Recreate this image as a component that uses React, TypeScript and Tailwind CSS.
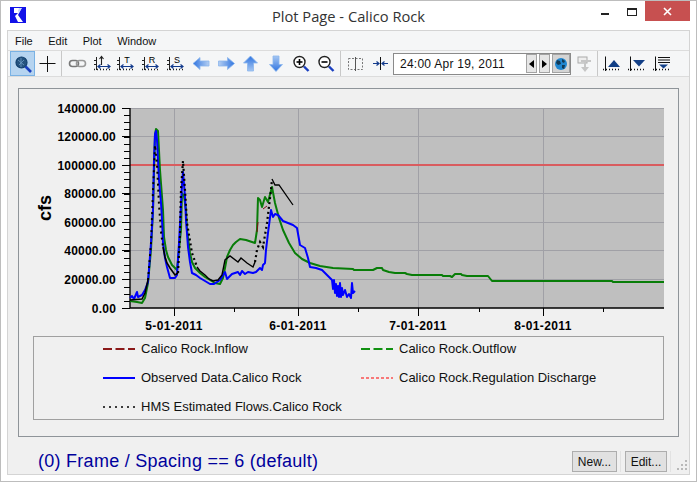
import type { ReactNode } from "react";

const yLabels = ["140000.00", "120000.00", "100000.00", "80000.00", "60000.00", "40000.00", "20000.00", "0.00"];
const yMajor = [108, 136, 165, 193, 222, 250, 279, 308];
const xMajor = [174, 298, 418, 543];
const xMinor = [234, 358, 479, 603];
const xLabels = ["5-01-2011", "6-01-2011", "7-01-2011", "8-01-2011"];

const outflow =
  "130,301 137,302 142,303 145,298 148,283 151,250 153,210 155,135 156,129 158,131 160,170 163,210 164,237 166,250 168,257 172,265 177,270 179,250 181,230 182,193 184,196 186,210 187,230 190,253 192,262 195,268 200,273 205,277 210,280 215,283 220,284 223,278 225,268 227,257 230,250 233,245 236,242 240,239 246,240 255,243 257,230 258,198 260,200 262,207 265,197 268,202 272,187 275,203 279,218 283,230 289,243 295,253 302,259 310,263 320,266 333,268 353,269 354,270 373,270 377,268 382,268 383,270 389,272 395,273 405,273 407,274 412,275 442,275 443,276 450,276 452,277 455,274 461,274 462,275 467,276 488,276 492,281 612,281 613,282 664,282";
const observed =
  "130,298 132,296 134,299 137,292 138,297 142,295 145,290 148,282 151,243 153,210 154,160 155,134 156,131 157,140 159,180 161,203 162,220 163,243 165,258 167,267 170,278 175,278 177,275 179,243 181,205 182,185 183,172 185,197 186,220 188,247 190,262 192,273 196,275 200,278 205,281 210,284 214,284 220,280 225,272 227,279 232,274 238,272 240,275 242,271 245,274 248,272 253,273 256,272 260,268 262,270 263,265 265,263 266,250 268,233 271,210 273,217 275,214 278,215 283,221 288,223 293,225 297,228 300,245 305,248 308,258 310,267 316,268 322,270 327,275 332,280 333,289 334,280 335,293 336,284 337,296 338,286 339,297 340,283 341,297 342,288 343,295 345,290 347,297 349,294 351,298 352,283 353,293 355,291";
const hmsStart = "130,300 142,299 145,293 148,280";
const hmsA = "148,280 151,243 153,190 155,145 157,165 159,205 161,232 163,247";
const hmsB = "163,247 165,257 167,263 170,268 175,275 178,273";
const hmsC = "178,273 180,235 181,190 183,161 185,190 187,223 192,253 197,267";
const hmsD = "197,267 200,271 205,275 209,279 213,281 218,280 222,275 225,260 230,256 238,262 241,258 247,263 253,267 255,262";
const hmsE = "255,262 257,250 260,242 263,247 267,223 271,190 272,179";
const hmsF = "272,179 275,185 279,185 293,205";

function Chart() {
  const minors: number[] = [];
  for (let i = 0; i <= 28; i++) minors.push(108 + (i * 200) / 28);
  return (
    <svg width={658} height={247} viewBox="19 89 658 247" className="block shrink-0">
      <text x={51} y={208} transform="rotate(-90 51 208)" textAnchor="middle" className="fill-black text-[18px] font-bold">
        cfs
      </text>
      <rect x={130} y={108} width={534} height={200} fill="#bfbfbf" />
      {yMajor.slice(0, 7).map((y) => (
        <line key={y} x1={130} x2={664} y1={y + 0.5} y2={y + 0.5} stroke="#a0a0a6" />
      ))}
      {xMajor.map((x) => (
        <line key={x} x1={x + 0.5} x2={x + 0.5} y1={108} y2={308} stroke="#a0a0a6" />
      ))}
      <line x1={130} x2={664} y1={165} y2={165} stroke="#d95c5f" strokeWidth={2} />

      {minors.map((y) => (
        <line key={y} x1={124} x2={130} y1={Math.round(y) + 0.5} y2={Math.round(y) + 0.5} stroke="#000" />
      ))}
      {yMajor.map((y) => (
        <line key={y} x1={122} x2={130} y1={y + 0.5} y2={y + 0.5} stroke="#000" />
      ))}
      <line x1={130} x2={130} y1={108} y2={308} stroke="#000" strokeWidth={1.4} />
      <line x1={130} x2={664} y1={308} y2={308} stroke="#000" strokeWidth={1.4} />
      {xMajor.map((x) => (
        <line key={x} x1={x + 0.5} x2={x + 0.5} y1={308} y2={316} stroke="#000" />
      ))}
      {xMinor.map((x) => (
        <line key={x} x1={x + 0.5} x2={x + 0.5} y1={308} y2={312} stroke="#000" />
      ))}
      {yLabels.map((label, i) => (
        <text key={label} x={116} y={yMajor[i] + 4.5} textAnchor="end" className="fill-black text-[12px] font-bold tracking-[0.2px]">
          {label}
        </text>
      ))}
      {xLabels.map((label, i) => (
        <text key={label} x={xMajor[i]} y={330} textAnchor="middle" className="fill-black text-[12px] font-bold tracking-[0.4px]">
          {label}
        </text>
      ))}

      <polyline points={outflow} fill="none" stroke="#087d08" strokeWidth={2} strokeLinejoin="round" />
      <polyline points="257,232 258,222" fill="none" stroke="#7d1212" strokeWidth={1} />
      <polyline points="263,209 267,206" fill="none" stroke="#7d1212" strokeWidth={1} />
      <polyline points={observed} fill="none" stroke="#0000ff" strokeWidth={2} strokeLinejoin="round" />
      <polyline points={hmsStart} fill="none" stroke="#000" strokeWidth={1.6} />
      <polyline points={hmsA} fill="none" stroke="#000" strokeWidth={2} strokeDasharray="2 4" />
      <polyline points={hmsB} fill="none" stroke="#000" strokeWidth={1.6} />
      <polyline points={hmsC} fill="none" stroke="#000" strokeWidth={2.2} strokeDasharray="2 3" />
      <polyline points={hmsD} fill="none" stroke="#000" strokeWidth={1.4} />
      <polyline points={hmsE} fill="none" stroke="#000" strokeWidth={2.2} strokeDasharray="2 3" />
      <polyline points={hmsF} fill="none" stroke="#000" strokeWidth={1.3} />
    </svg>
  );
}

function Swatch({ color, width, dash }: { color: string; width: number; dash?: string }) {
  return (
    <svg width={32} height={4} className="mr-[6px] shrink-0">
      <line x1={0} x2={32} y1={2} y2={2} stroke={color} strokeWidth={width} strokeDasharray={dash} />
    </svg>
  );
}

function LegendItem({ color, width, dash, label }: { color: string; width: number; dash?: string; label: string }) {
  return (
    <div className="flex items-center whitespace-nowrap text-[13px] text-[#111]">
      <Swatch color={color} width={width} dash={dash} />
      {label}
    </div>
  );
}

function Legend() {
  return (
    <div className="mx-[14px] grid h-[84px] grid-cols-[258px_1fr] grid-rows-[24px_33px_25px] border border-[#a0a0a0] pl-[69px]">
      <LegendItem color="#8b1a1a" width={2} dash="9 3.5" label="Calico Rock.Inflow" />
      <LegendItem color="#119111" width={2} dash="9 3.5" label="Calico Rock.Outflow" />
      <LegendItem color="#0000ff" width={2} label="Observed Data.Calico Rock" />
      <LegendItem color="#ff0000" width={1} dash="3 2" label="Calico Rock.Regulation Discharge" />
      <LegendItem color="#000" width={1.5} dash="2 4" label="HMS Estimated Flows.Calico Rock" />
    </div>
  );
}

function ToolIcon({ children, w = 25 }: { children: ReactNode; w?: number }) {
  return (
    <svg width={w} height={25} viewBox={`0 0 ${w} 25`} className="block shrink-0">
      {children}
    </svg>
  );
}

function Separator() {
  return <div className="mx-[1px] h-[25px] w-px shrink-0 bg-[#c8c8c8]" />;
}

function ZoomIcon({ minus }: { minus?: boolean }) {
  return (
    <ToolIcon>
      <circle cx={9.5} cy={11} r={5.5} fill="#fff" stroke="#222" strokeWidth={1.4} />
      <line x1={6.5} x2={12.5} y1={11} y2={11} stroke="#000" strokeWidth={1.6} />
      {!minus && <line x1={9.5} x2={9.5} y1={8} y2={14} stroke="#000" strokeWidth={1.6} />}
      <line x1={14} y1={15.5} x2={18.5} y2={20} stroke="#1a3fc0" strokeWidth={2.4} />
    </ToolIcon>
  );
}

function AxisIcon({ letter }: { letter?: string }) {
  return (
    <ToolIcon>
      <g transform={letter ? "translate(-2 0)" : undefined}>
        <line x1={6.5} x2={6.5} y1={6} y2={19} stroke="#222" strokeWidth={1} />
        <line x1={4} x2={21} y1={18.5} y2={18.5} stroke="#222" strokeWidth={1.5} strokeDasharray="1 2" />
        <line x1={4} x2={7} y1={9.5} y2={9.5} stroke="#222" />
        <line x1={4} x2={7} y1={13.5} y2={13.5} stroke="#222" />
        <path d="M8 15.5h12M10.5 13.5l-2.5 2 2.5 2M17.5 13.5l2.5 2-2.5 2" fill="none" stroke="#123a8c" strokeWidth={1.2} />
        {letter ? (
          <text x={14} y={12} textAnchor="middle" className="fill-black text-[9px]">
            {letter}
          </text>
        ) : (
          <path d="M11.5 14V5.5M9.5 8l2-2.5 2 2.5" fill="none" stroke="#222" strokeWidth={1.1} />
        )}
      </g>
    </ToolIcon>
  );
}

function BlueArrow({ d, fill }: { d: string; fill: string }) {
  return (
    <ToolIcon>
      <path d={d} fill={fill} stroke="#8cb6ee" strokeWidth={0.8} strokeLinejoin="round" />
    </ToolIcon>
  );
}

function TriangleAxis({ tri, lines }: { tri: string; lines?: boolean }) {
  return (
    <ToolIcon>
      <line x1={6.5} x2={6.5} y1={5.5} y2={20} stroke="#111" strokeWidth={1} />
      <line x1={4} x2={22} y1={18.5} y2={18.5} stroke="#111" strokeWidth={1.5} strokeDasharray="1 2" />
      {lines && <path d="M9 6.5h12M9 9h12M9 11.5h12" stroke="#111" strokeWidth={1} />}
      <path d={tri} fill="#123f86" />
    </ToolIcon>
  );
}

function TimeStepButton({ children }: { children: ReactNode }) {
  return (
    <div className="flex h-[19px] w-[11px] items-center justify-center border border-[#a3a3a3] bg-[#e6e6e6]">{children}</div>
  );
}

function Toolbar() {
  return (
    <div className="flex h-[27px] shrink-0 items-center border-t border-b border-[#dcdcdc] bg-[#f5f6f7] pl-[2px]">
      <div className="box-border h-[25px] w-[25px] shrink-0 border border-[#7ab2e4] bg-[#b6d4f0]">
        <svg width={23} height={23} viewBox="1 1 23 23" className="block">
          <circle cx={11.5} cy={11.5} r={5.5} fill="#25537f" stroke="#12406e" strokeWidth={1.2} />
          <path d="M8 9l6 5M9 14l5-5M11 7v9" stroke="#6f9cc4" strokeWidth={0.8} />
          <line x1={15.5} y1={15.5} x2={21} y2={21} stroke="#1a3fc0" strokeWidth={2.6} />
        </svg>
      </div>
      <ToolIcon>
        <path d="M12.5 5v16M4.5 12.5h16" stroke="#111" strokeWidth={1} />
      </ToolIcon>
      <Separator />
      <div className="w-[2px] shrink-0" />
      <ToolIcon>
        <rect x={4.5} y={9.5} width={9} height={6} rx={3} fill="none" stroke="#777" strokeWidth={1.6} />
        <rect x={11.5} y={9.5} width={9} height={6} rx={3} fill="none" stroke="#999" strokeWidth={1.6} />
      </ToolIcon>
      <AxisIcon />
      <AxisIcon letter="T" />
      <AxisIcon letter="R" />
      <AxisIcon letter="S" />
      <BlueArrow d="M3 12.5L10 6.5V10H19V15H10V18.5Z" fill="url(#arrowLeft)" />
      <BlueArrow d="M19.5 12.5L12.5 6.5V10H3.5V15H12.5V18.5Z" fill="url(#arrowRight)" />
      <BlueArrow d="M10.5 5L3.5 12H7.5V20H13.5V12H17.5Z" fill="url(#arrowUp)" />
      <BlueArrow d="M11 20.5L4.5 13.5H8V5H14V13.5H17.5Z" fill="url(#arrowDown)" />
      <ZoomIcon />
      <ZoomIcon minus />
      <div className="h-[25px] w-px shrink-0 bg-[#c8c8c8]" />
      <div className="w-[2px] shrink-0" />
      <ToolIcon>
        <rect x={5.5} y={7.5} width={14} height={11} fill="none" stroke="#777" strokeDasharray="2 1.5" />
        <line x1={12.5} x2={12.5} y1={6} y2={20} stroke="#555" />
      </ToolIcon>
      <ToolIcon>
        <line x1={12.5} x2={12.5} y1={6} y2={19} stroke="#111" />
        <path d="M5 12.5h6M8.5 10.5l2.5 2-2.5 2M20 12.5h-6M16.5 10.5l-2.5 2 2.5 2" fill="none" stroke="#123a8c" strokeWidth={1.2} />
      </ToolIcon>
      <div className="flex h-[22px] w-[178px] shrink-0 items-center border border-[#8a8a8a] bg-white pl-[6px] text-[12px] tracking-[0.25px] text-[#111]">
        <span className="flex-1">24:00 Apr 19, 2011</span>
        <div className="flex items-center gap-[2px]">
          <TimeStepButton>
            <span className="border-y-[4px] border-r-[5px] border-y-transparent border-r-black" />
          </TimeStepButton>
          <TimeStepButton>
            <span className="border-y-[4px] border-l-[5px] border-y-transparent border-l-black" />
          </TimeStepButton>
          <div className="flex h-[19px] w-[18px] items-center justify-center border border-[#a3a3a3] bg-[#d4d4d4]">
            <svg width={14} height={14} viewBox="0 0 14 14">
              <circle cx={7} cy={7} r={6} fill="#1f86d0" />
              <path d="M3 3l3 1 1 3-3 1-2-2zM8 2l3 2-1 2-2-1zM8 8l3 0-1 4-2-1z" fill="#123a56" />
            </svg>
          </div>
        </div>
      </div>
      <ToolIcon w={26}>
        <rect x={7} y={6} width={9} height={6} fill="#eee" stroke="#aaa" />
        <path d="M10 9h10v2h-5v5h3l-4 5-4-5h3v-5h-3z" fill="#c6c6c6" />
      </ToolIcon>
      <div className="h-[25px] w-px shrink-0 bg-[#c8c8c8]" />
      <div className="w-[1px] shrink-0" />
      <TriangleAxis tri="M9 16h12l-6-7z" />
      <TriangleAxis tri="M9 9h12l-6 6.5z" />
      <TriangleAxis tri="M10 13.5h9l-4.5 4z" lines />
    </div>
  );
}

function TitleBar() {
  return (
    <div className="grid h-[29px] shrink-0 grid-cols-[1fr_auto_1fr] bg-white">
      <div className="pl-[3px] pt-[6px]">
        <svg width={16} height={16} viewBox="0 0 16 16" className="block">
          <rect width={16} height={16} fill="#1212e8" />
          <path d="M4 1h7.5L8 8l5 7H8L5 9l3-3H4z" fill="#fff" />
          <path d="M9 1h3L9 6 8 4z" fill="#c8d8ff" />
        </svg>
      </div>
      <div className="pt-[5px] text-[14.7px] leading-[20px] text-[#333] [font-family:'Open_Sans',sans-serif]">
        Plot Page - Calico Rock
      </div>
      <div className="flex items-start justify-end">
        <div className="mr-[18px] mt-[12px] h-[2px] w-[8px] bg-[#222]" />
        <div className="mr-[8px] mt-[7px] h-[8px] w-[10px] border border-t-2 border-[#222]" />
        <div className="flex h-[20px] w-[45px] items-center justify-center bg-[#c75050]">
          <svg width={9} height={9} viewBox="0 0 9 9">
            <path d="M1 1l7 7M8 1l-7 7" stroke="#fff" strokeWidth={1.6} />
          </svg>
        </div>
      </div>
    </div>
  );
}

function DialogButton({ label, w }: { label: string; w: string }) {
  return (
    <button className={`${w} h-[21px] border border-[#adadad] bg-[#e1e1e1] text-[12px] text-[#111]`}>{label}</button>
  );
}

export default function App() {
  return (
    <div className="flex h-[482px] w-[697px] flex-col overflow-hidden border border-[#bdbdbd] bg-white px-[6px] pb-[6px] [font-family:'Liberation_Sans',Arial,sans-serif]">
      <svg width={0} height={0} className="absolute">
        <defs>
          <linearGradient id="arrowLeft" x1="0" y1="0" x2="1" y2="0">
            <stop offset="0" stopColor="#2f74e0" />
            <stop offset="1" stopColor="#b5cff2" />
          </linearGradient>
          <linearGradient id="arrowRight" x1="1" y1="0" x2="0" y2="0">
            <stop offset="0" stopColor="#2f74e0" />
            <stop offset="1" stopColor="#b5cff2" />
          </linearGradient>
          <linearGradient id="arrowUp" x1="0" y1="0" x2="0" y2="1">
            <stop offset="0" stopColor="#2f74e0" />
            <stop offset="1" stopColor="#a5c6f2" />
          </linearGradient>
          <linearGradient id="arrowDown" x1="0" y1="1" x2="0" y2="0">
            <stop offset="0" stopColor="#2f74e0" />
            <stop offset="1" stopColor="#a5c6f2" />
          </linearGradient>
        </defs>
      </svg>
      <TitleBar />
      <div className="flex min-h-0 flex-1 flex-col border border-[#d4d4d4] bg-[#f0f0f0]">
        <div className="flex h-[19px] shrink-0 items-center gap-[15.5px] bg-[#f5f6f7] pl-[7px] pt-[1px] text-[11px] text-[#111]">
          <span>File</span>
          <span>Edit</span>
          <span>Plot</span>
          <span>Window</span>
        </div>
        <Toolbar />
        <div className="mx-[10px] mt-[11px] flex h-[349px] shrink-0 flex-col border border-[#8f9499]">
          <Chart />
          <Legend />
        </div>
        <div className="flex flex-1 items-end pb-[2px] pl-[30px]">
          <span className="flex-1 text-[18px] leading-[22px] tracking-[0.27px] text-[#00009c]">(0) Frame / Spacing == 6 (default)</span>
          <div className="flex items-center gap-[3px] pr-[5px]">
            <DialogButton label="New..." w="w-[45px]" />
            <div className="mr-[1px] h-[21px] w-px bg-[#e2e2e2]" />
            <DialogButton label="Edit..." w="w-[42px]" />
            <div className="h-[21px] w-px bg-[#e2e2e2]" />
          </div>
          <svg width={13} height={16} viewBox="0 0 13 16" className="self-end">
            <path d="M9 12h2v2H9zM5 12h2v2H5zM1 12h2v2H1zM9 8h2v2H9zM5 8h2v2H5zM9 4h2v2H9z" fill="#b8b8b8" />
          </svg>
        </div>
      </div>
    </div>
  );
}
